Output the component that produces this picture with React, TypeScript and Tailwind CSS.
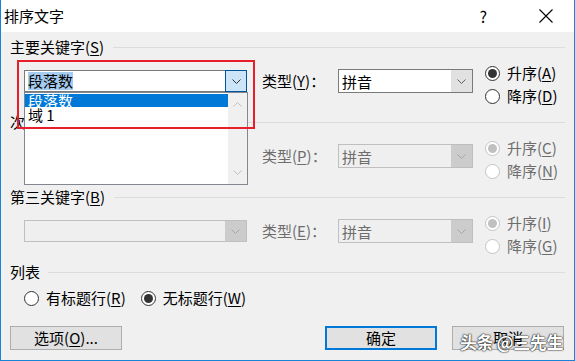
import React from 'react';

function Chevron({ className, up }: { className?: string; up?: boolean }) {
  return (
    <svg width="9" height="5" viewBox="0 0 9 5" className={className}>
      <path d={up ? 'M0.5 4.5 L4.5 0.5 L8.5 4.5' : 'M0.5 0.5 L4.5 4.5 L8.5 0.5'} fill="none" stroke="currentColor" strokeWidth="1" />
    </svg>
  );
}

function Label({ text, accel, tail = '' }: { text: string; accel: string; tail?: string }) {
  return (
    <span className="whitespace-nowrap">
      {text}(<span className="underline underline-offset-2">{accel}</span>){tail}
    </span>
  );
}

function SectionHeader({ text, accel, gap = 'ml-[9px]' }: { text: string; accel?: string; gap?: string }) {
  return (
    <div className="flex items-center h-[22px] text-[15px] text-black">
      {accel ? <Label text={text} accel={accel} /> : <span>{text}</span>}
      <div className={`flex-1 h-px bg-[#dcdcdc] ${gap}`}></div>
    </div>
  );
}

function Combo({ text, disabled, focused, wide }: { text?: string; disabled?: boolean; focused?: boolean; wide?: boolean }) {
  const box = wide ? 'w-[223px] h-[22px] mt-[12px]' : 'w-[135px] h-[24px] mt-[11px]';
  return (
    <div
      className={`${box} flex border ${
        disabled ? 'border-[#bfbfbf] bg-[#efefef]' : 'border-[#7a7a7a] bg-white'
      }`}
    >
      <div className={`flex-1 flex items-center pl-[3px] text-[15px] ${disabled ? 'text-[#6d6d6d]' : 'text-black'}`}>
        {text && (
          <span className={focused ? 'bg-[#a6cdf0] leading-[18px]' : 'leading-none'}>{text}</span>
        )}
      </div>
      <div
        className={`w-[21px] flex items-center justify-center ${
          focused
            ? 'bg-[#cce4f7] border border-[#005499] -my-px -mr-px w-[22px]'
            : disabled
            ? 'bg-[#cccccc] text-[#a6a6a6]'
            : 'bg-[#e1e1e1] text-[#606060]'
        } ${focused ? 'text-[#333]' : ''}`}
      >
        <Chevron />
      </div>
    </div>
  );
}

function Radio({ checked, disabled, children }: { checked?: boolean; disabled?: boolean; children: React.ReactNode }) {
  return (
    <div className={`flex items-center h-[23px] text-[15px] ${disabled ? 'text-[#6d6d6d]' : 'text-black'}`}>
      <div
        className={`w-[15px] h-[15px] rounded-full border flex items-center justify-center ${
          disabled ? 'border-[#c4c4c4] bg-white' : 'border-[#333] bg-white'
        } ${disabled && checked ? 'bg-[#e0e0e0]' : ''}`}
      >
        {checked && (
          <div className={`w-[9px] h-[9px] rounded-full ${disabled ? 'bg-[#c0c0c0]' : 'bg-[#333]'}`}></div>
        )}
      </div>
      <span className="ml-[7px]">{children}</span>
    </div>
  );
}

function KeyRow({
  combo,
  typeAccel,
  up,
  down,
  disabled,
}: {
  combo: React.ReactNode;
  typeAccel: string;
  up: string;
  down: string;
  disabled?: boolean;
}) {
  return (
    <div className="flex items-start h-[53px]">
      <div className="ml-[14px]">{combo}</div>
      <div className={`ml-[15px] w-[76px] h-[24px] mt-[11px] flex items-center text-[15px] ${disabled ? 'text-[#6d6d6d]' : 'text-black'}`}>
        <Label text="类型" accel={typeAccel} tail="：" />
      </div>
      <Combo text="拼音" disabled={disabled} />
      <div className="ml-[12px] mt-[4px] flex flex-col">
        <Radio checked disabled={disabled}>
          <Label text="升序" accel={up} />
        </Radio>
        <Radio disabled={disabled}>
          <Label text="降序" accel={down} />
        </Radio>
      </div>
    </div>
  );
}

export default function App() {
  return (
    <div className="relative w-[575px] h-[361px] bg-[#f0f0f0] border-l border-r border-b border-[#1883d7] flex flex-col font-['Noto_Sans_CJK_SC','Noto_Sans',sans-serif] overflow-hidden">
      {/* Title bar */}
      <div className="h-[32px] bg-white flex items-center pl-[3px] text-[15px] text-black">
        <span>排序文字</span>
        <span className="ml-auto mr-[52px] text-[16px]">?</span>
        <svg width="14" height="14" viewBox="0 0 14 14" className="mr-[21px]">
          <path d="M0.5 0.5 L13.5 13.5 M13.5 0.5 L0.5 13.5" stroke="#000" strokeWidth="1.1" />
        </svg>
      </div>

      {/* Body */}
      <div className="flex-1 flex flex-col px-[9px] pt-[4px]">
        <SectionHeader text="主要关键字" accel="S" />
        <KeyRow combo={<Combo text="段落数" focused wide />} typeAccel="Y" up="A" down="D" />

        <SectionHeader text="次要关键字" accel="T" />
        <KeyRow combo={<Combo wide />} typeAccel="P" up="C" down="N" disabled />

        <SectionHeader text="第三关键字" accel="B" />
        <KeyRow combo={<Combo wide disabled />} typeAccel="E" up="I" down="G" disabled />

        <SectionHeader text="列表" gap="ml-[8px]" />
        <div className="flex items-center h-[30px] pl-[14px] gap-[15px]">
          <Radio>
            <Label text="有标题行" accel="R" />
          </Radio>
          <Radio checked>
            <Label text="无标题行" accel="W" />
          </Radio>
        </div>

        <div className="flex mt-[13px] text-[15px] text-black">
          <button className="w-[112px] h-[24px] bg-[#e1e1e1] border border-[#adadad] flex items-center justify-center">
            <Label text="选项" accel="O" tail="..." />
          </button>
          <button className="ml-auto w-[112px] h-[24px] bg-[#e1e1e1] border-2 border-[#0078d7] flex items-center justify-center">
            确定
          </button>
          <button className="ml-[15px] mr-px w-[112px] h-[24px] bg-[#e1e1e1] border border-[#adadad] flex items-center justify-center">
            取消
          </button>
        </div>
      </div>

      {/* Open dropdown list */}
      <div className="absolute left-[23px] top-[92px] w-[224px] h-[93px] bg-white border border-[#828790] flex text-[15px]">
        <div className="flex-1 flex flex-col pt-px">
          <div className="h-[13px] bg-[#0078d7] text-white flex items-center pl-[3px] leading-none">段落数</div>
          <div className="h-[15px] text-black flex items-center pl-[3px] leading-none">域 1</div>
        </div>
        <div className="w-[19px] bg-[#f0f0f0] flex flex-col items-center justify-between py-[9px] text-[#c0c0c0]">
          <Chevron up />
          <Chevron />
        </div>
      </div>

      {/* Red highlight frame */}
      <div className="absolute left-[16px] top-[60px] w-[238px] h-[69px] border-2 border-[#e81f2a]"></div>

      {/* Watermark */}
      <div className="absolute left-[459px] top-[329px] text-[17px] text-white font-bold tracking-tight [text-shadow:0_0_2px_#000,0_0_1px_#000]">
        头条 @三先生
      </div>
    </div>
  );
}
